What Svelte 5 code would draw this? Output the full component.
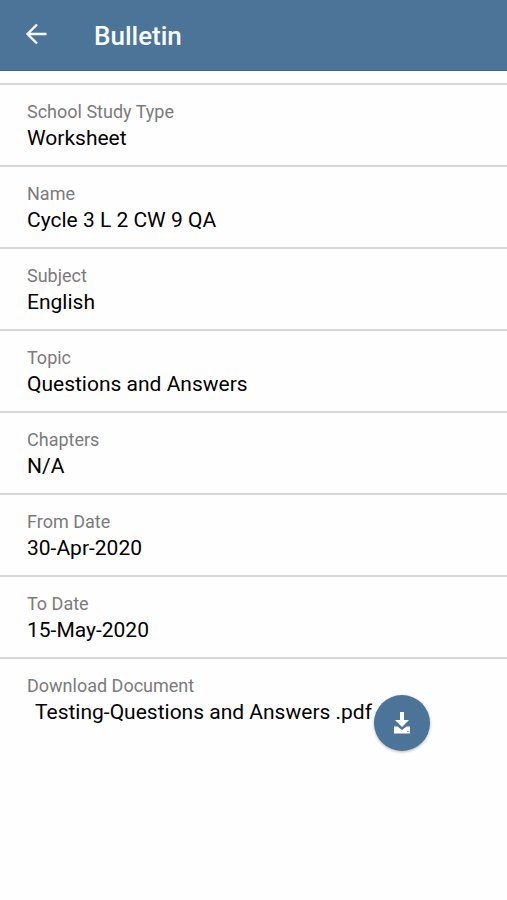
<script>
  const title = 'Bulletin'
  const fields = [
    { label: 'School Study Type', value: 'Worksheet' },
    { label: 'Name', value: 'Cycle 3 L 2 CW 9 QA' },
    { label: 'Subject', value: 'English' },
    { label: 'Topic', value: 'Questions and Answers' },
    { label: 'Chapters', value: 'N/A' },
    { label: 'From Date', value: '30-Apr-2020' },
    { label: 'To Date', value: '15-May-2020' },
  ]
  const file = 'Testing-Questions and Answers .pdf'
</script>

<style>
  :global(body) {
    background: #fefefe;
  }
  .screen {
    font-family: Roboto, sans-serif;
    color: #000;
  }
  header {
    display: flex;
    align-items: center;
    height: 71px;
    box-sizing: border-box;
    padding: 0 20px;
    gap: 42px;
    background: #4c7499;
    border-bottom: 1px solid #3d658b;
    color: #f8fbfe;
  }
  h1 {
    margin: 0;
    padding-top: 2px;
    font-size: 26px;
    font-weight: 500;
    line-height: 32px;
  }
  button {
    display: flex;
    align-items: center;
    justify-content: center;
    border: none;
    padding: 0;
    color: inherit;
    cursor: pointer;
  }
  .back {
    width: 32px;
    height: 32px;
    background: none;
  }
  .details {
    margin: 12px 0 0;
  }
  .row {
    border-top: 2px solid #d8d8d8;
    padding: 14px 27px;
  }
  dt {
    font-size: 18px;
    line-height: 26px;
    color: #7b7b7b;
  }
  dd {
    margin: 0;
    font-size: 21px;
    line-height: 26px;
  }
  .document {
    display: flex;
    align-items: flex-start;
    gap: 2px;
    padding-left: 8px;
  }
  .download {
    flex: none;
    width: 56px;
    height: 56px;
    margin-top: -4px;
    border-radius: 50%;
    background: #4c7499;
    color: #fff;
    box-shadow: 0 1px 3px rgba(0, 0, 0, 0.3);
  }
</style>

<div class="screen">
  <header>
    <button class="back" aria-label="Back">
      <svg width="32" height="32" viewBox="0 0 32 32" fill="none" stroke="currentColor" stroke-width="2.4">
        <path d="M26.5 15H8M17 5.5L7.5 15L17 24.5" />
      </svg>
    </button>
    <h1>{title}</h1>
  </header>

  <dl class="details">
    {#each fields as field}
      <div class="row">
        <dt>{field.label}</dt>
        <dd>{field.value}</dd>
      </div>
    {/each}
    <div class="row">
      <dt>Download Document</dt>
      <dd class="document">
        <span>{file}</span>
        <button class="download" aria-label="Download">
          <svg width="18" height="22" viewBox="0 0 18 22" fill="currentColor">
            <path d="M7 0h4v8h5L9 15L2 8h5z" />
            <path d="M1 14.500h3.500l4.500 3.500l4.500-3.500H17v7H1z" />
            <path d="M14.500 19h1v1h-1z" fill="#4c7499" />
          </svg>
        </button>
      </dd>
    </div>
  </dl>
</div>
